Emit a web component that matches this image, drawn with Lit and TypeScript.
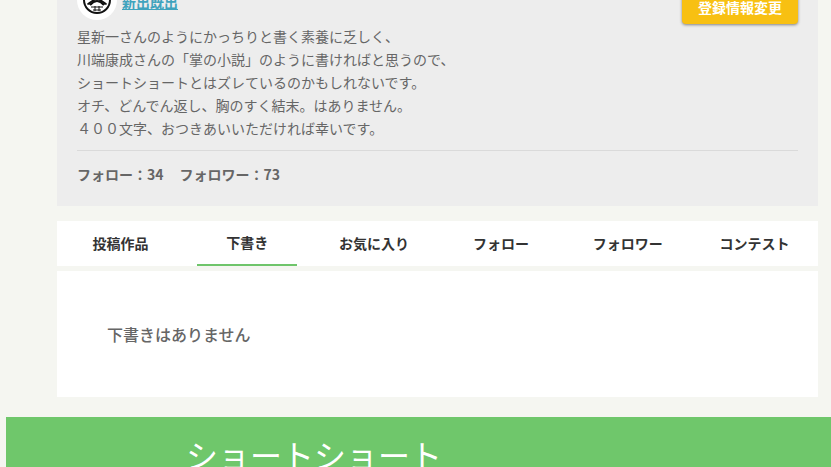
import { LitElement, html, css } from "lit";
import { customElement, state } from "lit/decorators.js";

const BIO = [
  "星新一さんのようにかっちりと書く素養に乏しく、",
  "川端康成さんの「掌の小説」のように書ければと思うので、",
  "ショートショートとはズレているのかもしれないです。",
  "オチ、どんでん返し、胸のすく結末。はありません。",
  "４００文字、おつきあいいただければ幸いです。",
];

const TABS = ["投稿作品", "下書き", "お気に入り", "フォロー", "フォロワー", "コンテスト"];

@customElement("app-root")
export class AppRoot extends LitElement {
  @state() private selected = 1;

  static styles = css`
    :host {
      display: block;
      height: 100vh;
      overflow: hidden;
      background: #f5f6f1;
      color: #666;
      font-family: "Noto Sans CJK JP", "Noto Sans", sans-serif;
      font-size: 14px;
      line-height: 23px;
    }
    main {
      padding: 0 13px 20px 57px;
    }
    .profile {
      display: flow-root;
      padding: 0 20px 8px;
      background: #ededed;
    }
    .head {
      display: flex;
      align-items: center;
      gap: 5px;
      margin-top: -20px;
      height: 45px;
    }
    .avatar {
      width: 40px;
      height: 40px;
      border-radius: 50%;
      background: #fff;
      align-self: flex-start;
    }
    .name {
      color: #3fa3bd;
      font-weight: 700;
      text-decoration: underline;
      flex: 1;
    }
    .name a {
      color: inherit;
    }
    .edit {
      align-self: flex-start;
      width: 116px;
      height: 44px;
      padding: 10px 0 0;
      border: 0;
      border-radius: 4px;
      background: #f8c012;
      box-shadow: 0 1px 3px rgba(0, 0, 0, 0.45);
      color: #fff;
      font: inherit;
      font-weight: 700;
      cursor: pointer;
    }
    .bio {
      margin: 0;
      padding-bottom: 10px;
      border-bottom: 1px solid #dadada;
    }
    .counts {
      display: flex;
      gap: 16px;
      padding: 12px 0;
      font-weight: 700;
    }
    .tabs {
      display: grid;
      grid-template-columns: repeat(6, 1fr);
      justify-items: center;
      margin-top: 15px;
      background: #fff;
    }
    .tab {
      width: 100px;
      height: 45px;
      padding: 0;
      border: 0;
      background: none;
      color: #333;
      font: inherit;
      font-weight: 700;
      white-space: nowrap;
      cursor: pointer;
    }
    .tab[aria-selected="true"] {
      border-bottom: 2px solid #6fc56b;
    }
    .panel {
      margin-top: 5px;
      padding: 50px;
      background: #fff;
      font-size: 16px;
      line-height: 26px;
      font-weight: 500;
    }
    .panel p {
      margin: 0;
    }
    footer {
      margin-left: 6px;
      padding: 13px 180px 40px;
      background: #6fc76b;
      color: #fff;
    }
    .brand {
      color: #fff;
      font-size: 32px;
      line-height: 48px;
      font-weight: 400;
      text-decoration: none;
      white-space: nowrap;
    }
  `;

  render() {
    return html`
      <main>
        <section class="profile">
          <div class="head">
            <svg class="avatar" viewBox="0 0 40 40" fill="none" stroke="#111" aria-hidden="true">
              <circle cx="20" cy="20" r="13" stroke-width="2" />
              <path d="M11 12l18 12M29 12L11 24" stroke-width="2" />
              <path d="M13 25q7-8 14 0" stroke-width="2" />
              <path d="M10 24h5M25 24h5M14 27h12M16 30h8M18 26v5M22 26v5" stroke-width="1" />
            </svg>
            <div class="name"><a href="#profile">新出既出</a></div>
            <button class="edit" type="button">登録情報変更</button>
          </div>
          <p class="bio">${BIO.map((line, i) => (i ? html`<br />${line}` : line))}</p>
          <div class="counts"><span>フォロー：34</span><span>フォロワー：73</span></div>
        </section>
        <div class="tabs" role="tablist">
          ${TABS.map(
            (label, i) => html`<button
              class="tab"
              type="button"
              role="tab"
              aria-selected=${i === this.selected ? "true" : "false"}
              @click=${() => (this.selected = i)}
            >${label}</button>`
          )}
        </div>
        <section class="panel" role="tabpanel"><p>下書きはありません</p></section>
      </main>
      <footer><a class="brand" href="#top">ショートショート</a></footer>
    `;
  }
}
